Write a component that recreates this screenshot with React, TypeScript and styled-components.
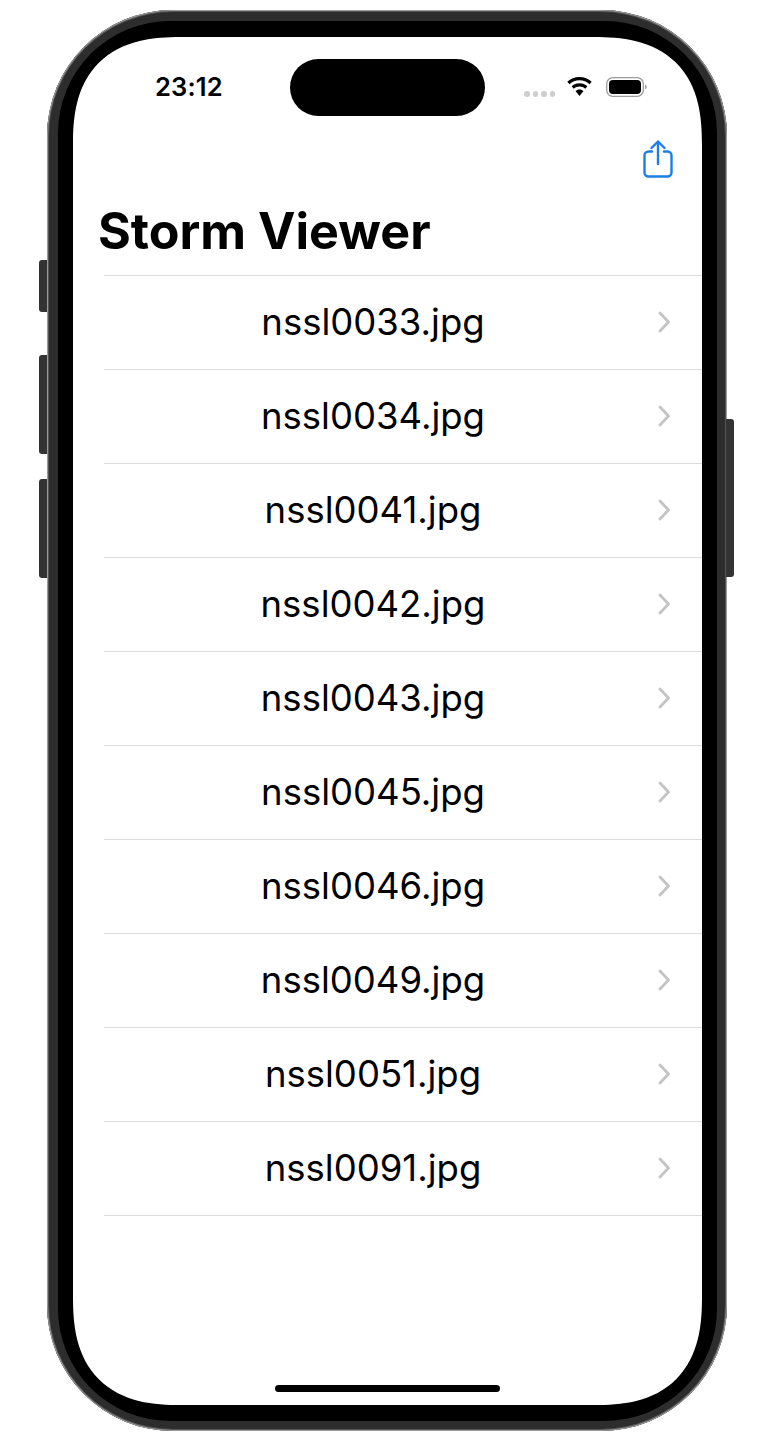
import React from 'react';
import styled, { createGlobalStyle } from 'styled-components';

const GlobalStyle = createGlobalStyle`
  html, body {
    margin: 0;
    padding: 0;
    background: #fff;
  }
  body {
    width: 766px;
    height: 1442px;
    overflow: hidden;
    font-family: Inter, "Liberation Sans", sans-serif;
  }
`;

const Page = styled.div`
  width: 766px;
  height: 1442px;
  padding: 10px 39px 11px 47px;
  box-sizing: border-box;
`;

const Phone = styled.div`
  position: relative;
  height: 100%;
  box-sizing: border-box;
  padding: 11px 10px 10px 11px;
  border-radius: 126px;
  background: #2d2d2d;
  box-shadow: inset 0 0 0 1px #9a9a9a, inset 0 0 0 2px #555;
`;

const SideButton = styled.div<{ $top: number; $height: number; $right?: boolean }>`
  position: absolute;
  top: ${p => p.$top}px;
  height: ${p => p.$height}px;
  width: 8px;
  ${p => (p.$right ? 'right: -7px;' : 'left: -8px;')}
  border-radius: ${p => (p.$right ? '0 3px 3px 0' : '3px 0 0 3px')};
  background: #333;
`;

const Bezel = styled.div`
  height: 100%;
  box-sizing: border-box;
  padding: 16px 15px;
  border-radius: 112px;
  background: #000;
`;

const Screen = styled.div`
  position: relative;
  height: 100%;
  border-radius: 108px;
  corner-shape: superellipse(1.34);
  background: #fff;
  overflow: hidden;
  display: flex;
  flex-direction: column;
`;

const StatusBar = styled.div`
  height: 60px;
  padding: 40px 55px 0 82px;
  box-sizing: border-box;
  display: flex;
  align-items: flex-start;
  justify-content: space-between;
  flex-shrink: 0;
`;

const Time = styled.span`
  font-size: 25.5px;
  line-height: 20px;
  font-weight: 600;
  color: #000;
  letter-spacing: 0.2px;
`;

const StatusIcons = styled.div`
  display: flex;
  align-items: flex-start;
`;

const SignalDots = styled.div`
  display: flex;
  gap: 3px;
  margin: 14px 11px 0 0;
`;

const Dot = styled.span`
  width: 5.5px;
  height: 5.5px;
  border-radius: 50%;
  background: #cfcfcf;
`;

const Wifi = styled.svg`
  width: 27px;
  height: 20px;
  margin-right: 13px;
`;

const Battery = styled.svg`
  width: 41px;
  height: 21px;
`;

const Island = styled.div`
  position: absolute;
  top: 22px;
  left: 217px;
  width: 195px;
  height: 57px;
  border-radius: 29px;
  background: #000;
`;

const NavBar = styled.div`
  height: 90px;
  padding: 0 29px 0 0;
  display: flex;
  justify-content: flex-end;
  align-items: flex-start;
  flex-shrink: 0;
`;

const ShareIcon = styled.svg`
  width: 30px;
  height: 40px;
  margin-top: 43px;
`;

const Title = styled.h1`
  margin: 0;
  padding: 0 0 0 25px;
  height: 88px;
  box-sizing: border-box;
  font-size: 50.2px;
  line-height: 88px;
  font-weight: 700;
  color: #000;
`;

const List = styled.ul`
  margin: 0 0 0 31px;
  padding: 0;
  list-style: none;
  border-top: 1px solid #dcdcde;
`;

const Row = styled.li`
  height: 94px;
  box-sizing: border-box;
  border-bottom: 1px solid #dcdcde;
  display: grid;
  grid-template-columns: 1fr 12px;
  align-items: center;
  padding: 0 32px 2px 0;
`;

const RowLabel = styled.span`
  font-size: 36.5px;
  font-weight: 400;
  color: #000;
  text-align: center;
  padding-right: 16px;
`;

const Chevron = styled.svg`
  width: 12px;
  height: 22px;
`;

const HomeIndicator = styled.div`
  position: absolute;
  left: 202px;
  bottom: 13px;
  width: 225px;
  height: 7px;
  border-radius: 4px;
  background: #000;
`;

const files = [
  'nssl0033.jpg',
  'nssl0034.jpg',
  'nssl0041.jpg',
  'nssl0042.jpg',
  'nssl0043.jpg',
  'nssl0045.jpg',
  'nssl0046.jpg',
  'nssl0049.jpg',
  'nssl0051.jpg',
  'nssl0091.jpg',
];

const App: React.FC = () => (
  <Page>
    <GlobalStyle />
    <Phone>
      <SideButton $top={250} $height={52} />
      <SideButton $top={345} $height={99} />
      <SideButton $top={469} $height={99} />
      <SideButton $right $top={409} $height={158} />
      <Bezel>
        <Screen>
          <StatusBar>
            <Time>23:12</Time>
            <StatusIcons>
              <SignalDots>
                <Dot />
                <Dot />
                <Dot />
                <Dot />
              </SignalDots>
              <Wifi viewBox="0 0 27 20">
                <path
                  d="M13.5 3.2c3.9 0 7.4 1.5 10 4l2.2-2.4C22.500 1.800 18.200 0 13.500 0S4.500 1.800 1.300 4.800l2.200 2.400c2.600-2.500 6.100-4 10-4z"
                  fill="#000"
                />
                <path
                  d="M13.500 9.500c2.200 0 4.200.8 5.700 2.200l2.200-2.400c-2.100-1.900-4.900-3.100-7.900-3.100s-5.800 1.200-7.900 3.100l2.200 2.400c1.500-1.400 3.500-2.200 5.700-2.200z"
                  fill="#000"
                />
                <path d="M13.500 12.500c-1.600 0-3 .6-4 1.600l4 4.900 4-4.900c-1-1-2.400-1.600-4-1.600z" fill="#000" />
              </Wifi>
              <Battery viewBox="0 0 41 21">
                <rect x="0.7" y="0.7" width="36.600" height="18.600" rx="6" fill="none" stroke="#9c9c9c" strokeWidth="1.300" />
                <rect x="3" y="3" width="32" height="14" rx="4" fill="#000" />
                <path d="M39 7.500c1 .4 1.700 1.400 1.700 2.500s-.7 2.100-1.700 2.500z" fill="#9c9c9c" />
              </Battery>
            </StatusIcons>
          </StatusBar>
          <Island />
          <NavBar>
            <ShareIcon viewBox="0 0 30 40" fill="none" stroke="#1a7fe8" strokeWidth="2.400" strokeLinecap="round" strokeLinejoin="round">
              <path d="M9 11.500H5.500a4 4 0 0 0-4 4v17a4 4 0 0 0 4 4h19a4 4 0 0 0 4-4v-17a4 4 0 0 0-4-4H21" />
              <path d="M15 24V2" />
              <path d="M8.500 8L15 1.500 21.500 8" />
            </ShareIcon>
          </NavBar>
          <Title>Storm Viewer</Title>
          <List>
            {files.map(name => (
              <Row key={name}>
                <RowLabel>{name}</RowLabel>
                <Chevron viewBox="0 0 12 22" fill="none" stroke="#c4c4c7" strokeWidth="2.800" strokeLinecap="round" strokeLinejoin="round">
                  <path d="M2 2l8.500 9L2 20" />
                </Chevron>
              </Row>
            ))}
          </List>
          <HomeIndicator />
        </Screen>
      </Bezel>
    </Phone>
  </Page>
);

export default App;
